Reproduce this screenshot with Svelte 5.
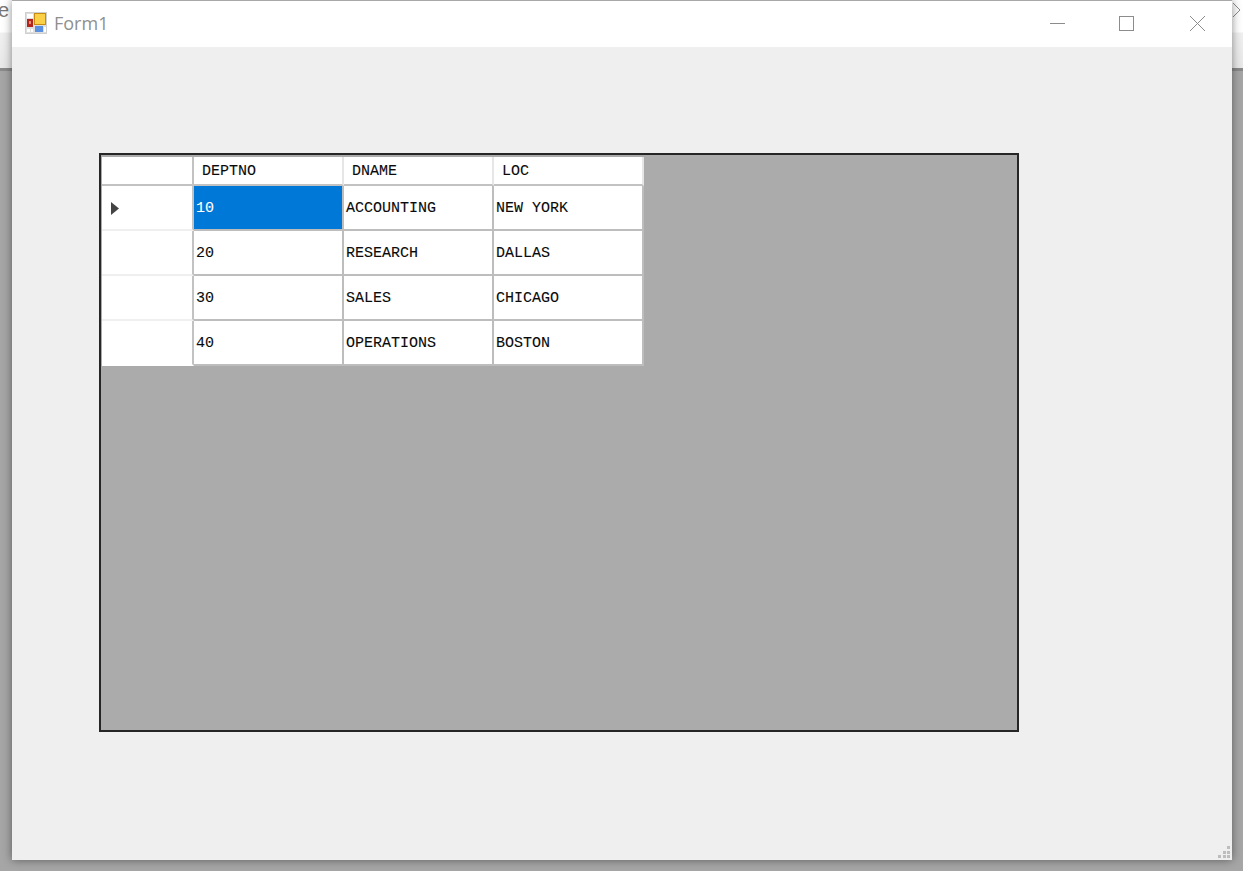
<script>
  const columns = ['DEPTNO', 'DNAME', 'LOC'];
  const rows = [
    ['10', 'ACCOUNTING', 'NEW YORK'],
    ['20', 'RESEARCH', 'DALLAS'],
    ['30', 'SALES', 'CHICAGO'],
    ['40', 'OPERATIONS', 'BOSTON']
  ];
</script>

<div class="desktop">
  <div class="behind">
    <span class="behind-e">e</span>
    <svg class="behind-x" width="8" height="16" viewBox="0 0 8 16"><path d="M0 2 L7 9 M0 16 L7 9" transform="translate(0,-1)" stroke="#8a8a8a" fill="none"/></svg>
  </div>
  <div class="window">
    <header class="titlebar">
      <svg class="appicon" width="22" height="22" viewBox="0 0 22 22">
        <rect x="0" y="0" width="22" height="22" fill="#cfcfcf"/>
        <rect x="1" y="1" width="20" height="20" fill="#dedede"/>
        <rect x="2" y="2" width="6" height="4" fill="#fff"/>
        <rect x="2" y="7" width="6" height="8" fill="#b3241c"/>
        <rect x="4" y="9" width="2" height="3" fill="#e88a70"/>
        <rect x="2" y="17" width="3" height="3" fill="#fff"/>
        <rect x="6" y="17" width="2" height="3" fill="#fff"/>
        <rect x="9" y="1" width="12" height="12" fill="#c78d12"/>
        <rect x="10" y="2" width="10" height="10" fill="#fbcf46"/>
        <rect x="10" y="14" width="8" height="6" fill="#5b8fe0"/>
        <rect x="19" y="15" width="2" height="5" fill="#fff"/>
      </svg>
      <span class="title">Form1</span>
      <div class="controls">
        <svg width="15" height="15" viewBox="0 0 15 15"><path d="M0 7.5 H15" stroke="#8c8c8c"/></svg>
        <svg width="15" height="15" viewBox="0 0 15 15"><rect x="0.5" y="0.5" width="14" height="14" fill="none" stroke="#8c8c8c"/></svg>
        <svg class="close" width="15" height="15" viewBox="0 0 15 15"><path d="M0 0 L15 15 M15 0 L0 15" stroke="#8c8c8c"/></svg>
      </div>
    </header>
    <main class="client">
      <div class="datagrid">
        <div class="table">
          <div class="corner"></div>
          {#each columns as c}
            <div class="colhead">{c}</div>
          {/each}
          {#each rows as row, i}
            <div class="rowhead" class:last={i === rows.length - 1}>
              {#if i === 0}
                <svg width="8" height="13" viewBox="0 0 8 13"><path d="M0 0 L8 6.5 L0 13 Z" fill="#444"/></svg>
              {/if}
            </div>
            {#each row as cell, j}
              <div class="cell" class:selected={i === 0 && j === 0}>{cell}</div>
            {/each}
          {/each}
        </div>
      </div>
      <div class="grip">
        {#each [[2,0],[1,1],[2,1],[0,2],[1,2],[2,2]] as d}
          <i style="grid-column:{d[0] + 1};grid-row:{d[1] + 1}"></i>
        {/each}
      </div>
    </main>
  </div>
</div>

<style>
  :global(body) {
    margin: 0;
    background: #a6a6a6;
  }
  .desktop {
    position: relative;
    width: 1243px;
    height: 871px;
    overflow: hidden;
    background: #a6a6a6;
    font-family: "Liberation Mono", monospace;
  }
  .behind {
    height: 68px;
    background: linear-gradient(#ffffff 0, #ffffff 32px, #f0f0f0 33px, #e8e8e8 68px);
    border-bottom: 3px solid #8a8a8a;
    position: relative;
  }
  .behind-e {
    position: absolute;
    left: 0;
    top: -1px;
    font: 20px "Liberation Sans", sans-serif;
    color: #777;
    margin-left: -2px;
  }
  .behind-x {
    position: absolute;
    left: 1233px;
    top: 2px;
  }
  .window {
    position: absolute;
    left: 12px;
    top: 0;
    width: 1220px;
    height: 860px;
    display: flex;
    flex-direction: column;
    box-shadow: 0 0 9px rgba(0, 0, 0, 0.45);
    border-top: 1px solid #a8a8a8;
    box-sizing: border-box;
  }
  .titlebar {
    height: 46px;
    flex: none;
    background: #fff;
    display: flex;
    align-items: center;
    padding-left: 13px;
  }
  .appicon {
    flex: none;
    margin-top: -3px;
  }
  .title {
    margin-left: 7px;
    font: 18px "Open Sans", "Liberation Sans", sans-serif;
    color: #8f8f8f;
    margin-top: -3px;
  }
  .controls {
    margin-left: auto;
    margin-right: 27px;
    display: flex;
    align-items: center;
    gap: 54px;
    margin-top: -1px;
  }
  .close {
    margin-left: 2px;
  }
  .client {
    flex: 1;
    background: #efefef;
    position: relative;
    padding: 106px 0 0 87px;
  }
  .datagrid {
    width: 920px;
    height: 579px;
    box-sizing: border-box;
    border: 2px solid #262626;
    background: #ababab;
    padding: 1px;
  }
  .table {
    display: grid;
    grid-template-columns: 92px 150px 150px 150px;
    grid-template-rows: 29px 45px 45px 45px 45px;
    width: 542px;
    margin-top: 1px;
    background: #fff;
    font-size: 15px;
    color: #0a0a0a;
    -webkit-text-stroke: 0.1px currentColor;
  }
  .corner,
  .colhead {
    background: #fff;
    box-sizing: border-box;
    border-right: 2px solid #e6e6e6;
    border-bottom: 2px solid #c2c2c2;
  }
  .corner {
    border-right-color: #c2c2c2;
  }
  .colhead {
    display: flex;
    align-items: center;
    padding-left: 8px;
    padding-top: 2px;
  }
  .rowhead {
    background: #fff;
    box-sizing: border-box;
    border-bottom: 2px solid #efefef;
    border-right: 2px solid #c2c2c2;
    display: flex;
    align-items: center;
    padding-left: 9px;
    padding-top: 2px;
  }
  .rowhead.last {
    border-bottom-color: #fff;
  }
  .cell {
    background: #fff;
    box-sizing: border-box;
    border-right: 2px solid #bdbdbd;
    border-bottom: 2px solid #bdbdbd;
    display: flex;
    align-items: center;
    padding-left: 2px;
    padding-top: 2px;
  }
  .cell.selected {
    background: #0078d7;
    color: #fff;
  }
  .grip {
    position: absolute;
    right: 2px;
    bottom: 2px;
    display: grid;
    grid-template-columns: repeat(3, 3px);
    grid-template-rows: repeat(3, 3px);
    gap: 1.5px;
  }
  .grip i {
    background: #bdbdbd;
  }
</style>
